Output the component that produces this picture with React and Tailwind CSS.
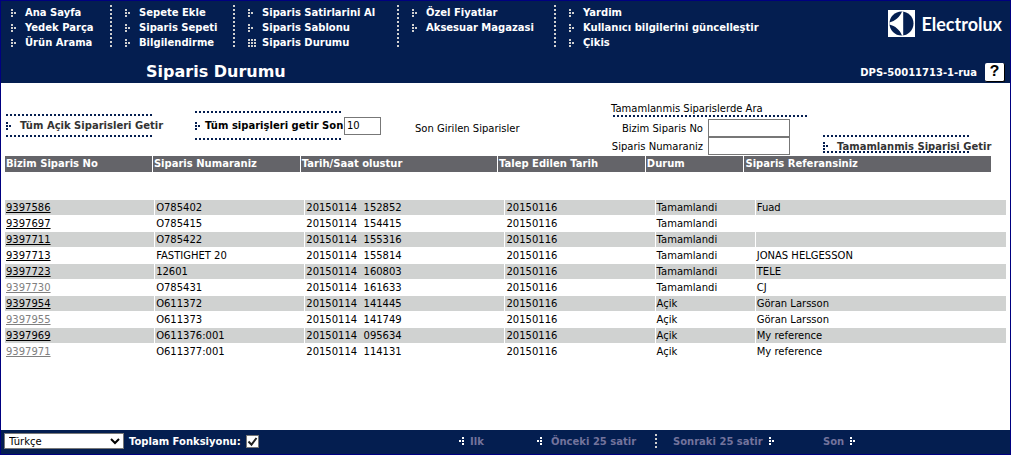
import React, { useState } from 'react';

const MENU = [
  { width: 'w-[99px]',  items: ['Ana Sayfa', 'Yedek Parça', 'Ürün Arama'] },
  { width: 'w-[108px]', items: ['Sepete Ekle', 'Siparis Sepeti', 'Bilgilendirme'] },
  { width: 'w-[149px]', items: ['Siparis Satirlarini Al', 'Siparis Sablonu', 'Siparis Durumu'] },
  { width: 'w-[142px]', items: ['Özel Fiyatlar', 'Aksesuar Magazasi'] },
  { width: '',          items: ['Yardim', 'Kullanıcı bilgilerini güncelleştir', 'Çikis'] },
];

const ACTIVE_ITEM = 'Siparis Durumu';

const ORDERS = [
  { no: '9397586', num: 'O785402',     time: '152852', status: 'Tamamlandi', ref: 'Fuad' },
  { no: '9397697', num: 'O785415',     time: '154415', status: 'Tamamlandi', ref: '' },
  { no: '9397711', num: 'O785422',     time: '155316', status: 'Tamamlandi', ref: '' },
  { no: '9397713', num: 'FASTIGHET 20', time: '155814', status: 'Tamamlandi', ref: 'JONAS HELGESSON' },
  { no: '9397723', num: '12601',       time: '160803', status: 'Tamamlandi', ref: 'TELE' },
  { no: '9397730', num: 'O785431',     time: '161633', status: 'Tamamlandi', ref: 'CJ', visited: true },
  { no: '9397954', num: 'O611372',     time: '141445', status: 'Açik', ref: 'Göran Larsson' },
  { no: '9397955', num: 'O611373',     time: '141749', status: 'Açik', ref: 'Göran Larsson', visited: true },
  { no: '9397969', num: 'O611376:001', time: '095634', status: 'Açik', ref: 'My reference' },
  { no: '9397971', num: 'O611377:001', time: '114131', status: 'Açik', ref: 'My reference', visited: true },
];

// Three dots with a fourth pointing right; flip for "previous" links
function Bullet({ className = '' }) {
  return (
    <svg className={`h-2 w-[5px] shrink-0 ${className}`} viewBox="0 0 5 8" fill="currentColor" shapeRendering="crispEdges">
      <path d="M0 0h2v2H0zM0 3h2v2H0zM0 6h2v2H0zM3 3h2v2H3z" />
    </svg>
  );
}

function GridBullet() {
  return (
    <svg className="h-2 w-2 shrink-0" viewBox="0 0 8 8" fill="currentColor" shapeRendering="crispEdges">
      <path d="M0 0h2v2H0zM3 0h2v2H3zM6 0h2v2H6zM0 3h2v2H0zM3 3h2v2H3zM6 3h2v2H6zM0 6h2v2H0zM3 6h2v2H3zM6 6h2v2H6z" />
    </svg>
  );
}

function DotsX({ className = '' }) {
  return (
    <div className={`h-[2px] bg-[repeating-linear-gradient(to_right,#041e50_0_2px,transparent_2px_4px)] ${className}`} />
  );
}

function DotsY({ className = '' }) {
  return (
    <div className={`w-[2px] shrink-0 bg-[repeating-linear-gradient(to_bottom,#d0d0d0_0_2px,transparent_2px_4px)] ${className}`} />
  );
}

function Logo() {
  return (
    <a href="#" className="flex items-center gap-[6px] text-white">
      <svg className="h-[27px] w-[27px]" viewBox="0 0 27 27">
        <rect width="27" height="27" fill="#fff" />
        <circle cx="13.5" cy="13.5" r="12" fill="#041e50" />
        <path d="M1.5 12.4C7 11 12 7 14 1.5H15.2V25.5H14C12 20 7 16 1.5 14.6z" fill="#fff" />
      </svg>
      <span className="font-['Lato',sans-serif] text-[18px] leading-6 font-bold">Electrolux</span>
    </a>
  );
}

function Header() {
  return (
    <header className="bg-[#041e50] font-bold text-white">
      <div className="flex items-start justify-between pt-1 pr-2 pl-[10px]">
        <nav className="flex">
          {MENU.map((col, i) => (
            <React.Fragment key={col.items[0]}>
              {i > 0 && <DotsY className="mr-[13px] h-[42px]" />}
              <ul className={col.width}>
                {col.items.map(item => (
                  <li key={item} className="h-[15px]">
                    <a href="#" className="flex items-center text-[10px] leading-[15px] whitespace-nowrap">
                      <span className="flex w-[14px] shrink-0 text-[#d0d0d0]">
                        {item === ACTIVE_ITEM ? <GridBullet /> : <Bullet />}
                      </span>
                      {item}
                    </a>
                  </li>
                ))}
              </ul>
            </React.Fragment>
          ))}
        </nav>
        <div className="pt-[5px]">
          <Logo />
        </div>
      </div>
      <div className="flex h-[33px] items-end justify-between pr-[5px] pb-px pl-[145px]">
        <h1 className="text-base leading-5">{ACTIVE_ITEM}</h1>
        <div className="flex items-center gap-2">
          <span className="text-[10px]">DPS-50011713-1-rua</span>
          <button className="h-[19px] w-5 rounded-[2px] border-r border-b border-black bg-white font-['Liberation_Mono',monospace] text-base leading-[19px] text-black">
            ?
          </button>
        </div>
      </div>
    </header>
  );
}

function Filters() {
  return (
    <form className="grid h-[73px] grid-cols-[189px_220px_196px_212px_1fr] pl-[5px] text-[10px] whitespace-nowrap">
      <div className="pt-[31px]">
        <DotsX className="w-[146px]" />
        <a href="#" className="flex h-[19px] items-center gap-[9px] font-bold text-[#333]">
          <Bullet className="text-[#041e50]" />
          Tüm Açik Siparisleri Getir
        </a>
        <DotsX className="w-[146px]" />
      </div>

      <div className="pt-[28px]">
        <DotsX className="w-[146px]" />
        <div className="flex h-[25px] items-center">
          <label htmlFor="last" className="flex w-[149px] items-center gap-[5px] font-bold">
            <Bullet className="text-[#041e50]" />
            Tüm siparişleri getir Son
          </label>
          <input id="last" defaultValue="10" className="h-[18px] w-[37px] border border-[#777] px-[2px]" />
        </div>
        <DotsX className="w-[146px]" />
      </div>

      <p className="pt-[38px] leading-4">Son Girilen Siparisler</p>

      <fieldset>
        <legend className="pt-5 leading-3">Tamamlanmis Siparislerde Ara</legend>
        <DotsX className="ml-[2px] w-[194px]" />
        <div className="grid grid-cols-[92px_82px] items-center gap-x-[5px] pt-[2px] text-right">
          <label htmlFor="our-no">Bizim Siparis No</label>
          <input id="our-no" className="h-[18px] border border-[#777] px-[2px]" />
          <label htmlFor="your-no">Siparis Numaraniz</label>
          <input id="your-no" className="h-[18px] border border-[#777] px-[2px]" />
        </div>
      </fieldset>

      <div className="pt-[52px]">
        <DotsX className="w-[146px]" />
        <a href="#" className="flex h-[14px] items-center gap-[9px] pt-1 font-bold text-[#333]">
          <Bullet className="text-[#041e50]" />
          Tamamlanmis Siparisi Getir
        </a>
        <DotsX className="w-[146px]" />
      </div>
    </form>
  );
}

function Orders() {
  return (
    <main className="grow px-1 pb-[60px] text-[10px]">
      <div className="pr-[15px]">
        <table className="w-full table-fixed border-separate border-spacing-0 text-left">
          <thead>
            <tr className="h-4 bg-[#646469] leading-4 whitespace-nowrap text-white *:border-r *:border-white *:p-0 *:pl-px *:last:border-r-0">
              <th className="w-[15%]">Bizim Siparis No</th>
              <th className="w-[15%]">Siparis Numaraniz</th>
              <th className="w-[20%]">Tarih/Saat olustur</th>
              <th className="w-[15%]">Talep Edilen Tarih</th>
              <th className="w-[10%]">Durum</th>
              <th className="w-[25%]">Siparis Referansiniz</th>
            </tr>
          </thead>
        </table>
      </div>

      <table aria-label="Siparisler" className="mt-7 w-full table-fixed border-separate border-spacing-0">
        <colgroup>
          <col className="w-[15%]" />
          <col className="w-[15%]" />
          <col className="w-[20%]" />
          <col className="w-[15%]" />
          <col className="w-[10%]" />
          <col className="w-[25%]" />
        </colgroup>
        <tbody>
          {ORDERS.map(o => (
            <tr
              key={o.no}
              className="h-4 leading-[15px] whitespace-nowrap odd:bg-[#d0d2d1] *:border-r *:border-b *:border-white *:p-0 *:pl-px *:last:border-r-0"
            >
              <td>
                <a href="#" className={`underline ${o.visited ? 'text-[#808080]' : 'text-black'}`}>{o.no}</a>
              </td>
              <td>{o.num}</td>
              <td className="whitespace-pre">{`20150114  ${o.time}`}</td>
              <td>20150116</td>
              <td>{o.status}</td>
              <td>{o.ref}</td>
            </tr>
          ))}
        </tbody>
      </table>
    </main>
  );
}

function Footer() {
  const [sum, setSum] = useState(true);

  return (
    <footer className="flex h-6 bg-[#041e50] pl-[3px] text-[10px] font-bold text-white">
      <div className="flex w-[455px] items-center pb-[2px]">
        <select aria-label="Dil" className="h-4 w-[120px] border border-[#777] bg-white font-normal text-black">
          <option>Türkçe</option>
        </select>
        <label htmlFor="sum" className="pl-[5px]">Toplam Fonksiyonu:</label>
        <span className="relative ml-[5px] h-[13px] w-[13px]">
          <input
            id="sum"
            type="checkbox"
            checked={sum}
            onChange={e => setSum(e.target.checked)}
            className="block h-[13px] w-[13px] appearance-none border border-[#777] bg-white"
          />
          {sum && (
            <svg className="pointer-events-none absolute inset-0" viewBox="0 0 13 13" fill="none" stroke="#222" strokeWidth="2">
              <path d="M2.5 6.5l3 3.2L10.5 3" />
            </svg>
          )}
        </span>
      </div>
      <nav className="flex items-center pb-[2px] text-[#73739c]">
        <a href="#" className="flex w-[78px] items-center gap-[6px]">
          <Bullet className="-scale-x-100 text-white" />Ilk
        </a>
        <a href="#" className="flex w-[118px] items-center gap-[9px] whitespace-nowrap">
          <Bullet className="-scale-x-100 text-white" />Önceki 25 satir
        </a>
        <DotsY className="h-[14px]" />
        <a href="#" className="ml-4 flex w-[150px] items-center gap-[6px] whitespace-nowrap">
          Sonraki 25 satir<Bullet className="text-white" />
        </a>
        <a href="#" className="flex items-center gap-[6px]">
          Son<Bullet className="text-white" />
        </a>
      </nav>
    </footer>
  );
}

export default function App() {
  return (
    <div className="flex min-h-screen flex-col border border-[#000080] bg-white font-['Verdana','DejaVu_Sans',sans-serif] text-black">
      <Header />
      <Filters />
      <Orders />
      <Footer />
    </div>
  );
}
